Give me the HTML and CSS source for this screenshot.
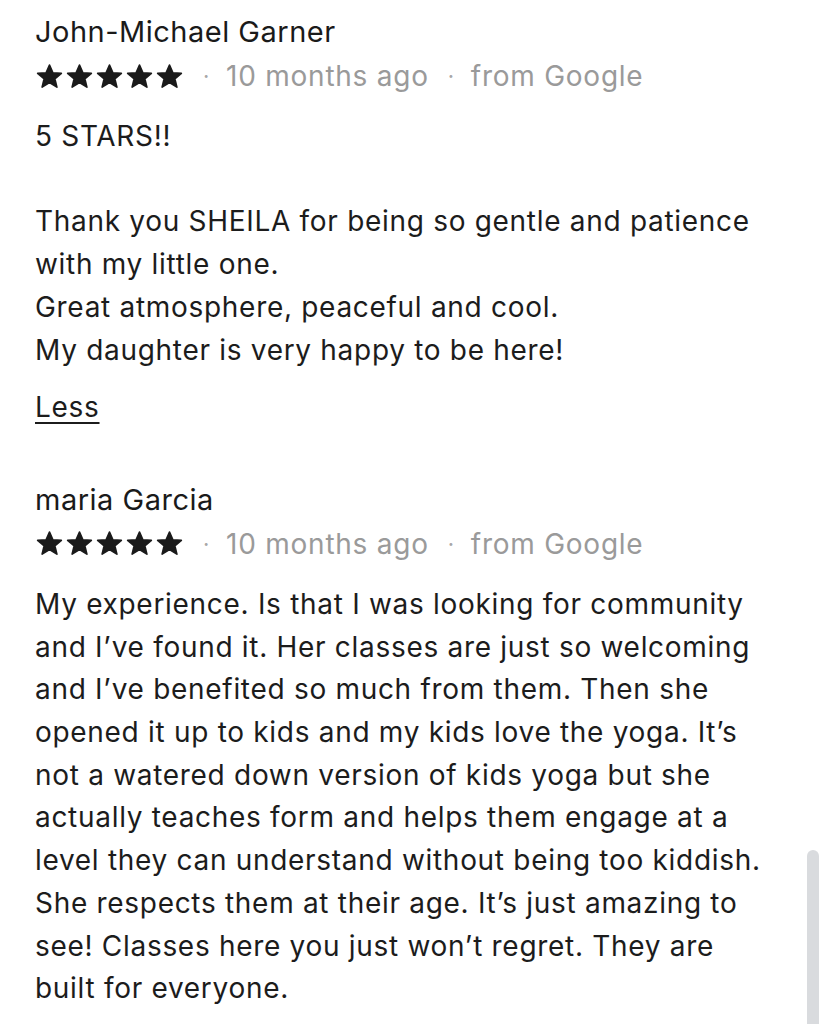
FILE: index.html
```html
<!DOCTYPE html>
<html lang="en">
<head>
<meta charset="utf-8">
<title>Reviews</title>
<link rel="stylesheet" href="styles.css">
</head>
<body>
<main class="reviews">
  <article class="review">
    <h2 class="name">John-Michael Garner</h2>
    <div class="meta">
      <span class="stars" aria-label="5 stars">
        <svg class="star" viewBox="0 0 24 24"><polygon points="12,2.5 14.8,9 21.8,9.4 16.4,13.9 18.1,20.8 12,17 5.9,20.8 7.6,13.9 2.2,9.4 9.2,9"/></svg>
        <svg class="star" viewBox="0 0 24 24"><polygon points="12,2.5 14.8,9 21.8,9.4 16.4,13.9 18.1,20.8 12,17 5.9,20.8 7.6,13.9 2.2,9.4 9.2,9"/></svg>
        <svg class="star" viewBox="0 0 24 24"><polygon points="12,2.5 14.8,9 21.8,9.4 16.4,13.9 18.1,20.8 12,17 5.9,20.8 7.6,13.9 2.2,9.4 9.2,9"/></svg>
        <svg class="star" viewBox="0 0 24 24"><polygon points="12,2.5 14.8,9 21.8,9.4 16.4,13.9 18.1,20.8 12,17 5.9,20.8 7.6,13.9 2.2,9.4 9.2,9"/></svg>
        <svg class="star" viewBox="0 0 24 24"><polygon points="12,2.5 14.8,9 21.8,9.4 16.4,13.9 18.1,20.8 12,17 5.9,20.8 7.6,13.9 2.2,9.4 9.2,9"/></svg>
      </span>
      <span class="dot">·</span>
      <span class="when">10 months ago</span>
      <span class="dot">·</span>
      <span class="source">from Google</span>
    </div>
    <p class="text">5 STARS!!

Thank you SHEILA for being so gentle and patience with my little one.
Great atmosphere, peaceful and cool.
My daughter is very happy to be here!</p>
    <a class="less" href="#">Less</a>
  </article>

  <article class="review">
    <h2 class="name">maria Garcia</h2>
    <div class="meta">
      <span class="stars" aria-label="5 stars">
        <svg class="star" viewBox="0 0 24 24"><polygon points="12,2.5 14.8,9 21.8,9.4 16.4,13.9 18.1,20.8 12,17 5.9,20.8 7.6,13.9 2.2,9.4 9.2,9"/></svg>
        <svg class="star" viewBox="0 0 24 24"><polygon points="12,2.5 14.8,9 21.8,9.4 16.4,13.9 18.1,20.8 12,17 5.9,20.8 7.6,13.9 2.2,9.4 9.2,9"/></svg>
        <svg class="star" viewBox="0 0 24 24"><polygon points="12,2.5 14.8,9 21.8,9.4 16.4,13.9 18.1,20.8 12,17 5.9,20.8 7.6,13.9 2.2,9.4 9.2,9"/></svg>
        <svg class="star" viewBox="0 0 24 24"><polygon points="12,2.5 14.8,9 21.8,9.4 16.4,13.9 18.1,20.8 12,17 5.9,20.8 7.6,13.9 2.2,9.4 9.2,9"/></svg>
        <svg class="star" viewBox="0 0 24 24"><polygon points="12,2.5 14.8,9 21.8,9.4 16.4,13.9 18.1,20.8 12,17 5.9,20.8 7.6,13.9 2.2,9.4 9.2,9"/></svg>
      </span>
      <span class="dot">·</span>
      <span class="when">10 months ago</span>
      <span class="dot">·</span>
      <span class="source">from Google</span>
    </div>
    <p class="text">My experience. Is that I was looking for community and I’ve found it. Her classes are just so welcoming and I’ve benefited so much from them. Then she opened it up to kids and my kids love the yoga. It’s not a watered down version of kids yoga but she actually teaches form and helps them engage at a level they can understand without being too kiddish. She respects them at their age. It’s just amazing to see! Classes here you just won’t regret. They are built for everyone.</p>
  </article>
</main>
<div class="scrollbar"></div>
</body>
</html>
```

FILE: styles.css
```css
html, body {
  margin: 0;
  padding: 0;
  background: #ffffff;
  height: 100%;
  overflow: hidden;
}

body {
  font-family: Inter, "Noto Sans", sans-serif;
  color: #1f1f1f;
  position: relative;
}

.reviews {
  padding: 14px 0 0 35px;
  width: 730px;
}

.review {
  display: flex;
  flex-direction: column;
  align-items: flex-start;
}

.review + .review {
  margin-top: 53px;
}

.name {
  margin: 0;
  font-size: 29px;
  font-weight: 400;
  line-height: 36px;
  color: #1a1a1a;
  letter-spacing: 0.5px;
}

.meta {
  display: flex;
  align-items: center;
  height: 36px;
  margin-top: 8px;
  font-size: 28px;
  letter-spacing: 0.75px;
  color: #9a9a9a;
}

.stars {
  display: flex;
  gap: 1px;
}

.star {
  width: 29px;
  height: 29px;
  display: block;
}

.star polygon {
  fill: #1a1a1a;
  stroke: #1a1a1a;
  stroke-width: 1.4;
  stroke-linejoin: round;
}

.dot {
  margin: 0 16px 0 19px;
  font-size: 22px;
  color: #a8a8a8;
}

.text {
  margin: 21px 0 0 0;
  font-size: 28px;
  line-height: 42.7px;
  letter-spacing: 0.7px;
  white-space: pre-line;
  color: #1c1c1c;
}

.less {
  margin-top: 15px;
  font-size: 28px;
  line-height: 42.7px;
  letter-spacing: 0.7px;
  color: #1c1c1c;
  text-decoration: underline;
  text-decoration-thickness: 2px;
  text-underline-offset: 5px;
}

.scrollbar {
  position: absolute;
  top: 850px;
  right: 0;
  width: 12px;
  height: 200px;
  background: #d9dbde;
  border-radius: 6px 6px 0 0;
}
```
